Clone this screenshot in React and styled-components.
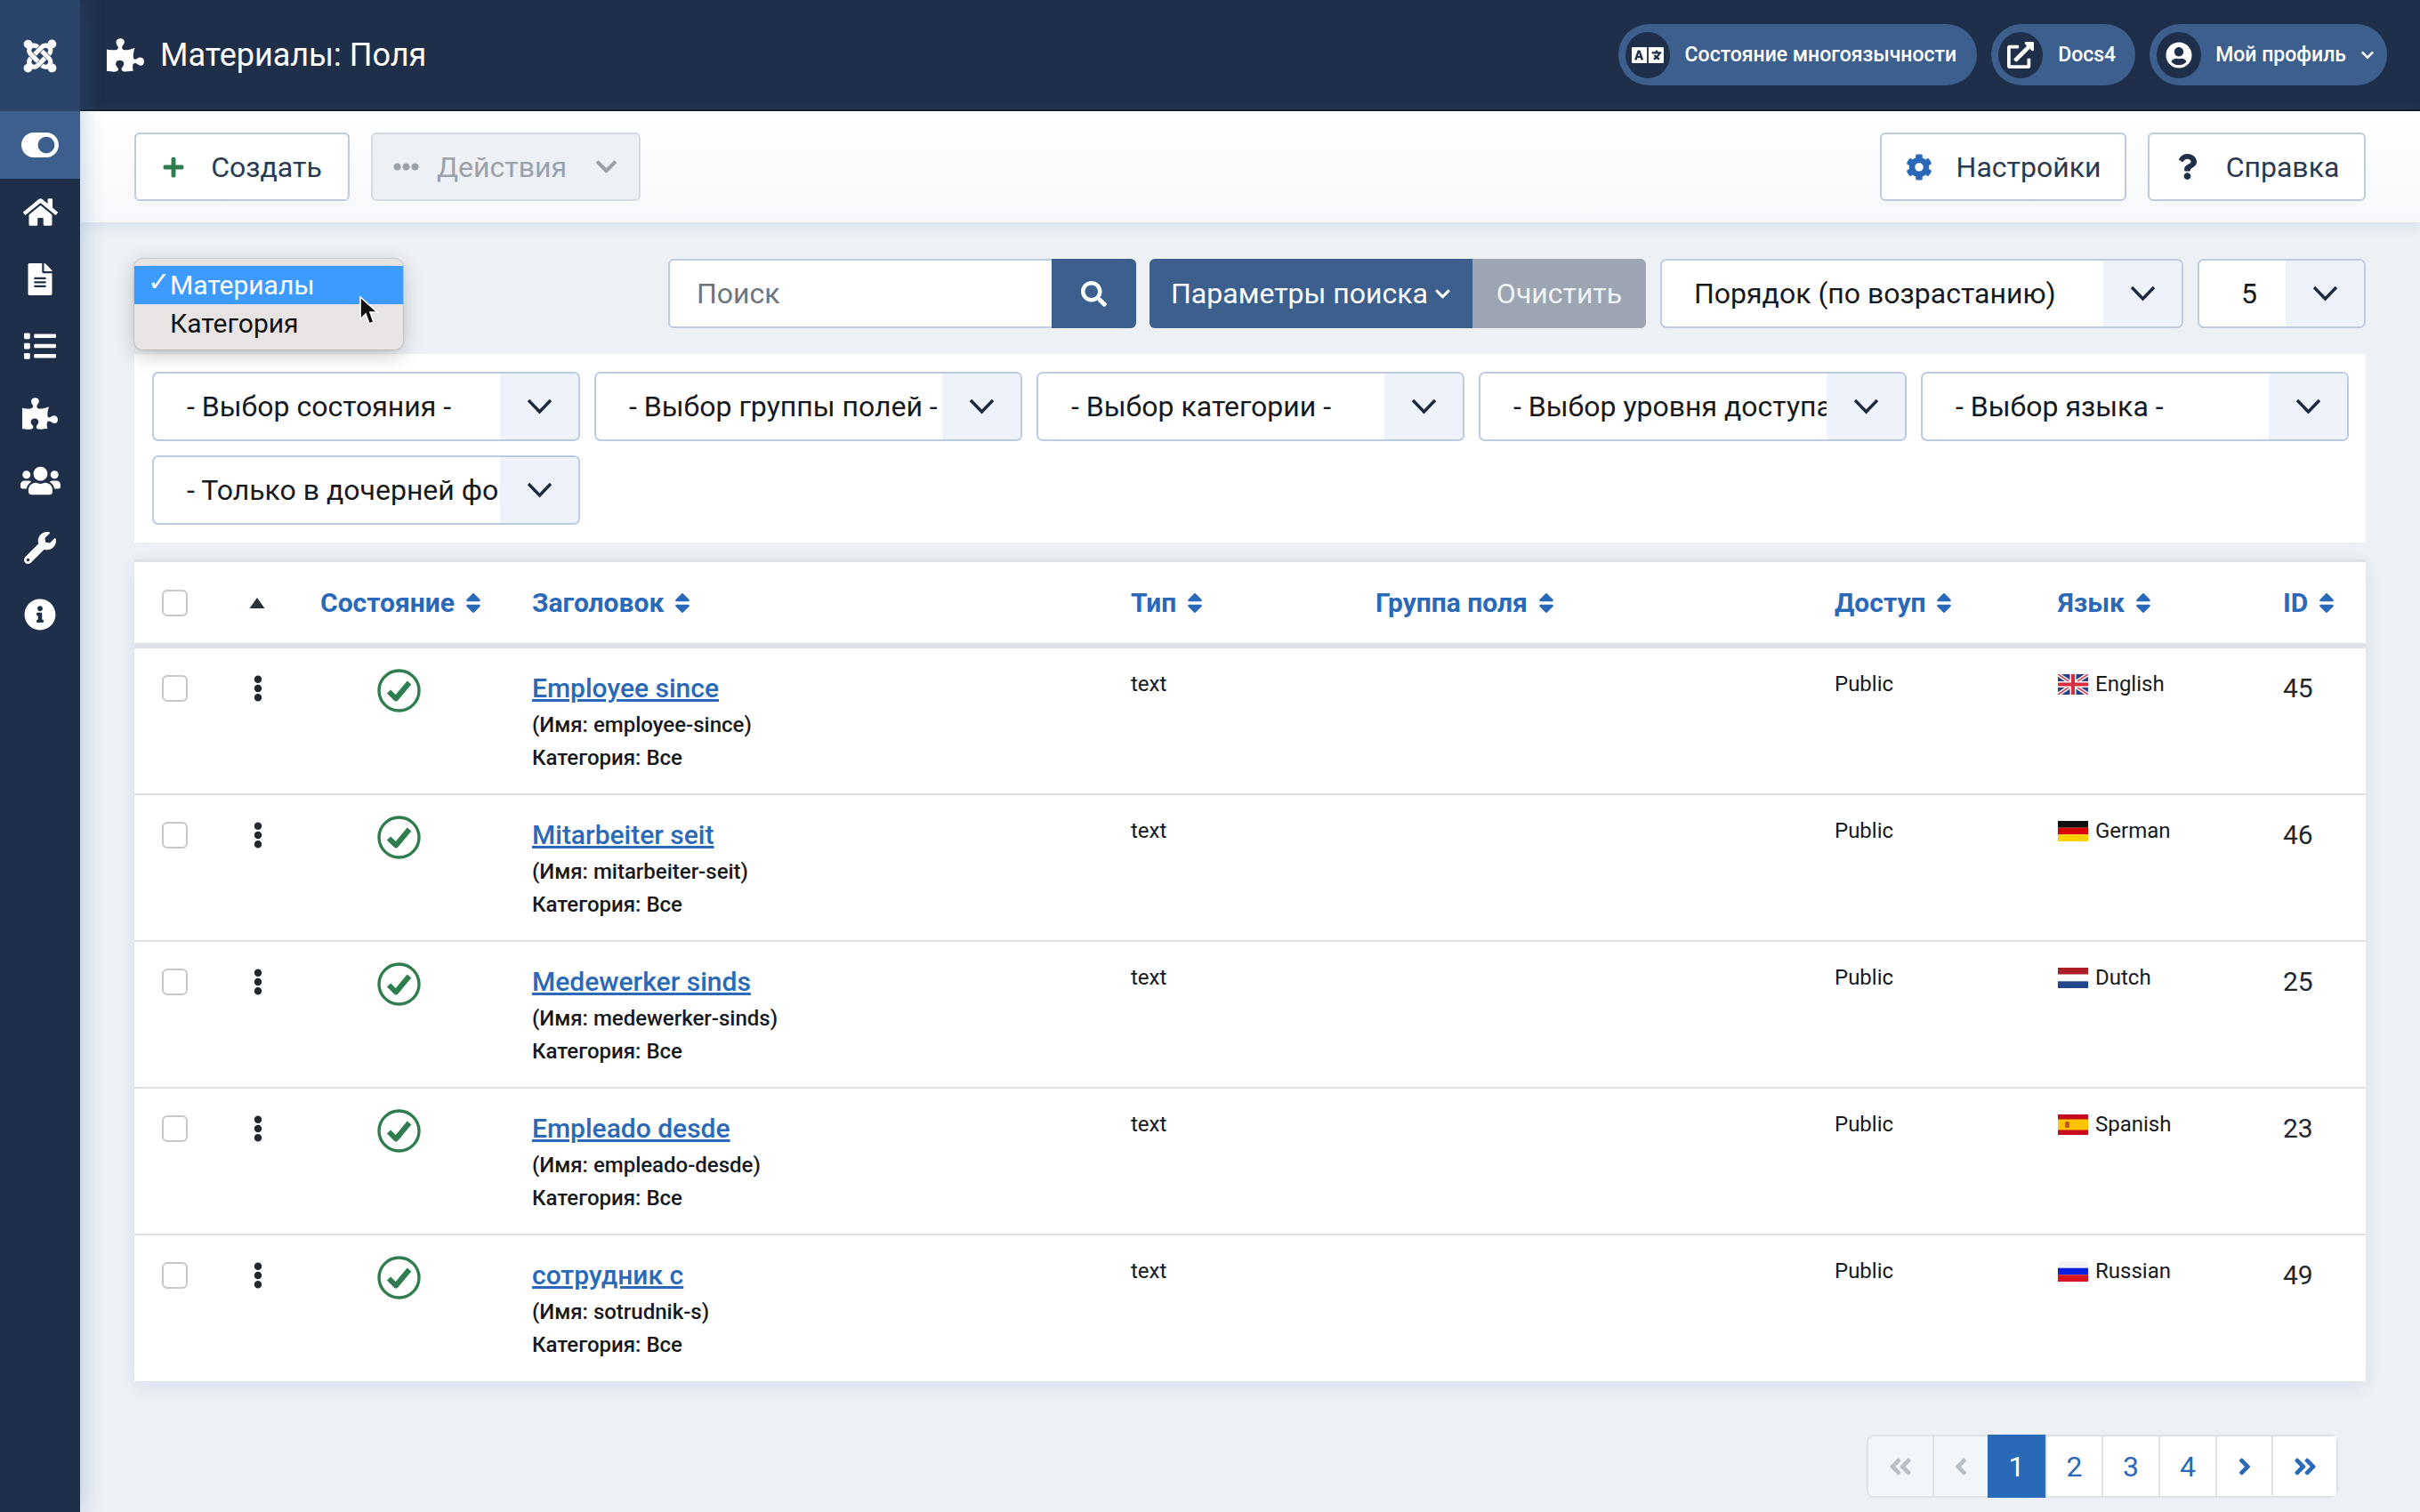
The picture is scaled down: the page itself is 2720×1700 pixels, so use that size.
import React from "react";
import styled, { createGlobalStyle } from "styled-components";
import {
  FaJoomla, FaPuzzlePiece, FaToggleOn, FaHome, FaFileAlt, FaList, FaUsers, FaWrench, FaInfoCircle,
  FaLanguage, FaExternalLinkAlt, FaUserCircle, FaChevronDown, FaPlus, FaEllipsisH, FaCog, FaQuestion,
  FaSearch, FaSort, FaEllipsisV, FaAngleDoubleLeft, FaAngleLeft, FaAngleRight, FaAngleDoubleRight,
} from "react-icons/fa";

const Global = createGlobalStyle`
  html, body { margin: 0; padding: 0; background: #edf1f5; }
  body { font-family: Roboto, "Liberation Sans", sans-serif; color: #16191d; }
  * { box-sizing: border-box; }
`;

const Shell = styled.div`
  display: grid;
  grid-template-columns: 90px 1fr;
  width: 2720px;
  height: 1700px;
  overflow: hidden;
`;
const Sidebar = styled.nav`
  background: #1f2f4a;
  display: flex;
  flex-direction: column;
  color: #fff;
  z-index: 3;
  box-shadow: 4px 0 22px rgba(70, 110, 170, 0.28);
`;
const LogoBlock = styled.div`
  height: 125px;
  background: #2b4469;
  display: flex;
  align-items: center;
  justify-content: center;
`;
const NavItem = styled.div`
  height: 75.5px;
  display: flex;
  align-items: center;
  justify-content: center;
  background: ${(p) => (p.$active ? "#3c5f8e" : "transparent")};
`;
const Main = styled.div`
  display: flex;
  flex-direction: column;
  min-width: 0;
`;
const Header = styled.header`
  height: 125px;
  background: #1f2f4a;
  border-bottom: 2px solid #0e1726;
  display: flex;
  align-items: center;
  padding: 0 37px 0 30px;
  color: #fff;
`;
const Title = styled.h1`
  display: flex;
  align-items: center;
  gap: 18px;
  margin: 0;
  font-size: 36px;
  font-weight: 400;
  flex: 1;
`;
const Pills = styled.div`
  display: flex;
  gap: 16px;
`;
const Pill = styled.div`
  height: 69px;
  border-radius: 35px;
  background: #3c5f8e;
  display: flex;
  align-items: center;
  padding: 0 ${(p) => p.$pr}px 0 8px;
  gap: ${(p) => p.$gap || 17}px;
  font-size: 23px;
  font-weight: 500;
  color: #fff;
  white-space: nowrap;
`;
const PillIcon = styled.span`
  width: 50px;
  height: 52px;
  border-radius: 50%;
  background: #1f2f4a;
  display: flex;
  align-items: center;
  justify-content: center;
`;
const Toolbar = styled.div`
  height: 125px;
  background: linear-gradient(#ffffff, #f6f8fb);
  box-shadow: 0 4px 16px rgba(130, 160, 205, 0.22);
  display: flex;
  align-items: center;
  gap: 24px;
  padding: 0 61px;
  z-index: 2;
`;
const Spacer = styled.div`
  flex: 1;
`;
const ToolButton = styled.div`
  height: 77px;
  width: ${(p) => p.$w}px;
  border: 2px solid ${(p) => (p.$disabled ? "#d5dce6" : "#bdcbdd")};
  border-radius: 6px;
  background: ${(p) => (p.$disabled ? "#edf0f4" : "#fff")};
  color: ${(p) => (p.$disabled ? "#9aa1a9" : "#2b3a4e")};
  display: flex;
  align-items: center;
  justify-content: center;
  gap: ${(p) => p.$gap}px;
  font-size: 32px;
  white-space: nowrap;
`;
const Content = styled.div`
  padding: 41px 61px 0;
  display: flex;
  flex-direction: column;
`;
const SearchRow = styled.div`
  position: relative;
  display: flex;
  justify-content: flex-end;
  gap: 16px;
  height: 78px;
`;
const Popup = styled.div`
  position: absolute;
  z-index: 5;
  left: 0;
  top: 0;
  width: 302px;
  height: 102px;
  padding-top: 8px;
  background: #e9e4e4;
  border-radius: 9px;
  box-shadow: 0 0 2px rgba(0, 0, 0, 0.35), 0 6px 22px rgba(0, 0, 0, 0.22);
  font-size: 30px;
  color: #111;
`;
const PopupOption = styled.div`
  height: 43px;
  display: flex;
  align-items: center;
  padding-left: 40px;
  background: ${(p) => (p.$on ? "#3d9bff" : "transparent")};
  color: ${(p) => (p.$on ? "#fff" : "#111")};
  position: relative;
`;
const Tick = styled.span`
  position: absolute;
  left: 15px;
  top: 0;
  font-size: 30px;
`;
const Cursor = styled.svg`
  position: absolute;
  left: 252px;
  top: 34px;
  width: 24px;
  height: 34px;
`;
const SearchGroup = styled.div`
  display: flex;
  width: 526px;
  margin-right: -1px;
`;
const SearchInput = styled.div`
  flex: 1;
  background: #fff;
  border: 2px solid #bdcbe0;
  border-right: 0;
  border-radius: 6px 0 0 6px;
  display: flex;
  align-items: center;
  padding-left: 30px;
  color: #6d747c;
  font-size: 32px;
`;
const SearchBtn = styled.div`
  width: 95px;
  background: #3c5f8e;
  border-radius: 0 6px 6px 0;
  display: flex;
  align-items: center;
  justify-content: center;
  color: #fff;
`;
const SplitGroup = styled.div`
  display: flex;
  font-size: 32px;
  color: #fff;
`;
const FilterBtn = styled.div`
  width: 363px;
  background: #3c5f8e;
  border-radius: 6px 0 0 6px;
  display: flex;
  align-items: center;
  justify-content: center;
  gap: 7px;
`;
const ClearBtn = styled.div`
  width: 195px;
  background: #9ca5b1;
  border-radius: 0 6px 6px 0;
  display: flex;
  align-items: center;
  justify-content: center;
  color: #f1f3f5;
`;
const Select = styled.div`
  width: ${(p) => p.$w}px;
  height: 78px;
  background: #fff;
  border: 2px solid #bdcbe0;
  border-radius: 7px;
  display: grid;
  grid-template-columns: 1fr ${(p) => p.$arrow || 88}px;
  font-size: 32px;
  color: #16191d;
  overflow: hidden;
`;
const SelectText = styled.div`
  display: flex;
  align-items: center;
  padding-left: ${(p) => p.$pl || 36}px;
  white-space: nowrap;
  overflow: hidden;
`;
const SelectArrow = styled.div`
  background: #eef3fb;
  display: flex;
  align-items: center;
  justify-content: center;
`;
const Chev = () => (
  <svg width="29" height="18" viewBox="0 0 29 18" fill="none" stroke="#1b2a40" strokeWidth="3.4">
    <path d="M2 2 L14.5 15 L27 2" />
  </svg>
);
const FilterPanel = styled.div`
  margin-top: 29px;
  background: #fff;
  padding: 20px 20px 20px;
  display: grid;
  grid-template-columns: repeat(5, 482px);
  gap: 16px 15px;
  height: 212px;
  align-content: start;
`;
const DataTable = styled.div`
  margin-top: 19px;
  border-top: 3px solid #dfe3e7;
  background: #fff;
  box-shadow: 0 6px 20px rgba(130, 160, 205, 0.22);
`;
const columns = "119px 90px 238px 673px 275px 516px 251px 253px 93px";
const HeadRow = styled.div`
  display: grid;
  grid-template-columns: ${columns};
  height: 97px;
  align-items: center;
  border-bottom: 6px solid #dee2e6;
`;
const HeadCell = styled.div`
  display: flex;
  align-items: center;
  gap: 7px;
  font-size: 30px;
  font-weight: 700;
  color: #2a69b8;
  white-space: nowrap;
`;
const CheckCell = styled.div`
  padding-left: 31px;
  padding-top: ${(p) => p.$pt || 0}px;
`;
const Box = styled.div`
  width: 29px;
  height: 30px;
  border: 2px solid #c4c8cd;
  border-radius: 6px;
  background: #fff;
`;
const SortUp = styled.svg`
  margin-left: 10px;
  display: block;
`;
const Row = styled.div`
  display: grid;
  grid-template-columns: ${columns};
  height: ${(p) => (p.$last ? 164 : 165)}px;
  border-bottom: ${(p) => (p.$last ? "0" : "2px solid #dde1e6")};
  align-items: start;
`;
const DragCell = styled.div`
  padding-top: 30px;
  padding-left: 5px;
  color: #22272e;
  line-height: 0;
`;
const StatusCell = styled.div`
  padding-top: 23px;
  padding-left: 64px;
  line-height: 0;
`;
const TitleCell = styled.div`
  padding-top: 27px;
`;
const TitleLink = styled.a`
  display: block;
  font-size: 30px;
  line-height: 36px;
  font-weight: 500;
  color: #2a69b8;
  text-decoration: underline;
  margin-bottom: 5px;
`;
const SubLine = styled.div`
  font-size: 24px;
  line-height: 37px;
  font-weight: 500;
  color: #16191d;
`;
const TextCell = styled.div`
  padding-top: 22px;
  font-size: 24px;
  line-height: 36px;
  color: #16191d;
`;
const LangCell = styled(TextCell)`
  display: flex;
  align-items: center;
  gap: 8px;
`;
const IdCell = styled.div`
  padding-top: 27px;
  font-size: 30px;
  line-height: 36px;
  color: #22272e;
`;
const Pager = styled.div`
  align-self: flex-end;
  display: flex;
  margin: 60px 31px 0 0;
  height: 71px;
  border: 2px solid #dfe3e7;
  border-radius: 8px;
  background: #fff;
`;
const PageCell = styled.div`
  width: ${(p) => p.$w}px;
  display: flex;
  align-items: center;
  justify-content: center;
  font-size: 32px;
  border-left: ${(p) => (p.$first || p.$active ? "0" : "2px solid #dfe3e7")};
  background: ${(p) => (p.$active ? "#2a69b8" : p.$off ? "#f3f6f9" : "#fff")};
  color: ${(p) => (p.$active ? "#fff" : p.$off ? "#b9bfc7" : "#2a69b8")};
  border-radius: ${(p) => (p.$first ? "6px 0 0 6px" : "0")};
  margin: ${(p) => (p.$active ? "-2px 0" : "0")};
`;

const FlagBox = styled.svg`
  width: 34px;
  height: 23px;
  display: block;
  flex: none;
`;
const Flag = ({ code }) => {
  if (code === "en")
    return (
      <FlagBox viewBox="0 0 34 23">
        <rect width="34" height="23" fill="#2b3f86" />
        <path d="M0 0L34 23M34 0L0 23" stroke="#fff" strokeWidth="4.5" />
        <path d="M0 0L34 23M34 0L0 23" stroke="#d8434f" strokeWidth="1.6" />
        <path d="M17 0V23M0 11.5H34" stroke="#fff" strokeWidth="7" />
        <path d="M17 0V23M0 11.5H34" stroke="#d72e3d" strokeWidth="4" />
      </FlagBox>
    );
  const bands = {
    de: ["#111", "#d90000", "#ffd000"],
    nl: ["#ad1d28", "#fff", "#21468b"],
    ru: ["#f4f4f4", "#0a1fe0", "#d8141e"],
  }[code];
  if (code === "es")
    return (
      <FlagBox viewBox="0 0 34 23">
        <rect width="34" height="23" fill="#c60b1e" />
        <rect y="5.5" width="34" height="12" fill="#ffc400" />
        <rect x="8" y="8" width="5" height="7" rx="1.5" fill="#c4552e" />
      </FlagBox>
    );
  return (
    <FlagBox viewBox="0 0 34 23">
      <rect width="34" height="7.7" fill={bands[0]} />
      <rect y="7.7" width="34" height="7.6" fill={bands[1]} />
      <rect y="15.3" width="34" height="7.7" fill={bands[2]} />
    </FlagBox>
  );
};

const Status = () => (
  <svg width="49" height="49" viewBox="0 0 49 49" fill="none">
    <circle cx="24.5" cy="24.5" r="22.5" stroke="#2f7d4f" strokeWidth="3.4" />
    <path d="M13 25.5 L21 33.5 L36 15.5" stroke="#2f7d4f" strokeWidth="6" strokeLinejoin="round" />
  </svg>
);

const rows = [
  ["Employee since", "employee-since", "en", "English", "45"],
  ["Mitarbeiter seit", "mitarbeiter-seit", "de", "German", "46"],
  ["Medewerker sinds", "medewerker-sinds", "nl", "Dutch", "25"],
  ["Empleado desde", "empleado-desde", "es", "Spanish", "23"],
  ["сотрудник с", "sotrudnik-s", "ru", "Russian", "49"],
];
const navIcons = [
  [FaHome, 39], [FaFileAlt, 36], [FaList, 36], [FaPuzzlePiece, 40], [FaUsers, 45], [FaWrench, 36], [FaInfoCircle, 36],
];
const filters = [
  "- Выбор состояния -", "- Выбор группы полей -", "- Выбор категории -",
  "- Выбор уровня доступа -", "- Выбор языка -", "- Только в дочерней форме -",
];
const heads = [["Состояние"], ["Заголовок"], ["Тип"], ["Группа поля"], ["Доступ"], ["Язык"], ["ID"]];

export default function App() {
  return (
    <Shell>
      <Global />
      <Sidebar>
        <LogoBlock><FaJoomla size={42} /></LogoBlock>
        <NavItem $active><FaToggleOn size={42} /></NavItem>
        {navIcons.map(([I, s], i) => (
          <NavItem key={i}><I size={s} /></NavItem>
        ))}
      </Sidebar>
      <Main>
        <Header>
          <Title><FaPuzzlePiece size={42} />Материалы: Поля</Title>
          <Pills>
            <Pill $pr={23}><PillIcon><FaLanguage size={36} /></PillIcon>Состояние многоязычности</Pill>
            <Pill $pr={22}><PillIcon><FaExternalLinkAlt size={30} /></PillIcon>Docs4</Pill>
            <Pill $pr={14} $gap={16}><PillIcon><FaUserCircle size={30} /></PillIcon>Мой профиль<FaChevronDown size={16} /></Pill>
          </Pills>
        </Header>
        <Toolbar>
          <ToolButton $w={242} $gap={29}><FaPlus size={26} color="#2f7d4f" />Создать</ToolButton>
          <ToolButton $w={303} $gap={20} $disabled>
            <FaEllipsisH size={29} />Действия<FaChevronDown size={27} style={{ marginLeft: 11 }} />
          </ToolButton>
          <Spacer />
          <ToolButton $w={277} $gap={27}><FaCog size={30} color="#2a69b8" />Настройки</ToolButton>
          <ToolButton $w={245} $gap={29}><FaQuestion size={29} color="#1f2f4a" />Справка</ToolButton>
        </Toolbar>
        <Content>
          <SearchRow>
            <Popup>
              <PopupOption $on>
                <Tick>✓</Tick>Материалы
                <Cursor viewBox="0 0 24 34">
                  <path d="M2 1 L2 26 L8 20 L12 31 L17 29 L13 18 L21 18 Z" fill="#111" stroke="#fff" strokeWidth="1.6" />
                </Cursor>
              </PopupOption>
              <PopupOption>Категория</PopupOption>
            </Popup>
            <SearchGroup>
              <SearchInput>Поиск</SearchInput>
              <SearchBtn><FaSearch size={29} /></SearchBtn>
            </SearchGroup>
            <SplitGroup>
              <FilterBtn>Параметры поиска<FaChevronDown size={19} /></FilterBtn>
              <ClearBtn>Очистить</ClearBtn>
            </SplitGroup>
            <Select $w={588}><SelectText>Порядок (по возрастанию)</SelectText><SelectArrow><Chev /></SelectArrow></Select>
            <Select $w={189}><SelectText $pl={47}>5</SelectText><SelectArrow><Chev /></SelectArrow></Select>
          </SearchRow>
          <FilterPanel>
            {filters.map((f) => (
              <Select key={f} $w={481}><SelectText $pl={37}>{f}</SelectText><SelectArrow><Chev /></SelectArrow></Select>
            ))}
          </FilterPanel>
          <DataTable>
            <HeadRow>
              <CheckCell><Box /></CheckCell>
              <div>
                <SortUp width="18" height="14" viewBox="0 0 18 14"><path d="M9 1 L17.5 13 H0.5 Z" fill="#2b3138" /></SortUp>
              </div>
              {heads.map(([h]) => (
                <HeadCell key={h}>{h}<FaSort size={28} /></HeadCell>
              ))}
            </HeadRow>
            {rows.map(([title, alias, code, lang, id], i) => (
              <Row key={id} $last={i === rows.length - 1}>
                <CheckCell $pt={30}><Box /></CheckCell>
                <DragCell><FaEllipsisV size={30} /></DragCell>
                <StatusCell><Status /></StatusCell>
                <TitleCell>
                  <TitleLink>{title}</TitleLink>
                  <SubLine>(Имя: {alias})</SubLine>
                  <SubLine>Категория: Все</SubLine>
                </TitleCell>
                <TextCell>text</TextCell>
                <div />
                <TextCell>Public</TextCell>
                <LangCell><Flag code={code} />{lang}</LangCell>
                <IdCell>{id}</IdCell>
              </Row>
            ))}
          </DataTable>
          <Pager>
            <PageCell $w={72} $first $off><FaAngleDoubleLeft size={30} /></PageCell>
            <PageCell $w={62} $off><FaAngleLeft size={30} /></PageCell>
            <PageCell $w={65} $active>1</PageCell>
            <PageCell $w={63}>2</PageCell>
            <PageCell $w={64}>3</PageCell>
            <PageCell $w={64}>4</PageCell>
            <PageCell $w={63}><FaAngleRight size={30} /></PageCell>
            <PageCell $w={73}><FaAngleDoubleRight size={30} /></PageCell>
          </Pager>
        </Content>
      </Main>
    </Shell>
  );
}
